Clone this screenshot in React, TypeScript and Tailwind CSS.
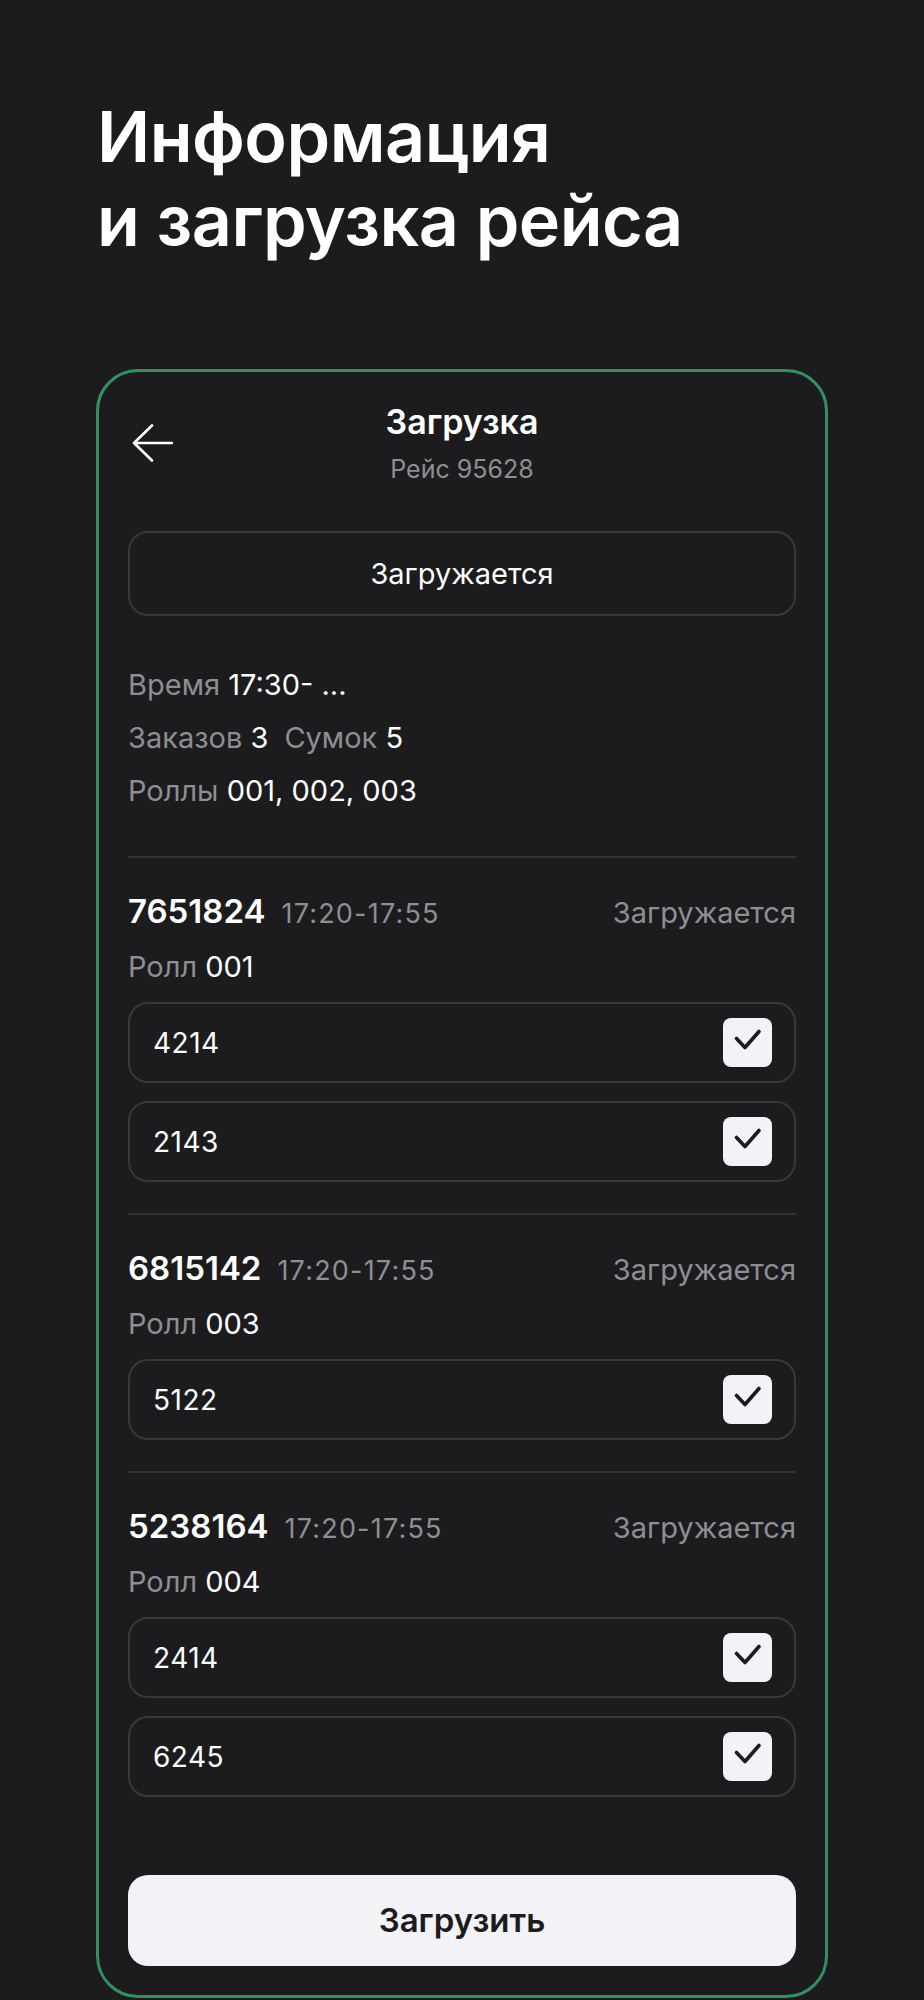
import React from "react";

type Order = {
  id: string;
  time: string;
  roll: string;
  bags: string[];
};

const ORDERS: Order[] = [
  { id: "7651824", time: "17:20-17:55", roll: "001", bags: ["4214", "2143"] },
  { id: "6815142", time: "17:20-17:55", roll: "003", bags: ["5122"] },
  { id: "5238164", time: "17:20-17:55", roll: "004", bags: ["2414", "6245"] },
];

const FONT = { fontFamily: "Inter, 'Noto Sans', sans-serif" };

function BackArrow() {
  return (
    <svg width="41" height="38" viewBox="0 0 41 38" fill="none">
      <path
        d="M40 19H2M20 1.5L2 19l18 17.5"
        stroke="#fff"
        strokeWidth="2.6"
        strokeLinecap="round"
        strokeLinejoin="round"
      />
    </svg>
  );
}

function CheckBox() {
  return (
    <div className="flex h-[49px] w-[49px] items-center justify-center rounded-[8px] bg-[#f2f2f7]">
      <svg width="49" height="49" viewBox="0 0 49 49" fill="none">
        <path
          d="M13.5 20.5l8.5 9 14-16"
          stroke="#1c1c1e"
          strokeWidth="3.6"
          strokeLinecap="round"
          strokeLinejoin="round"
        />
      </svg>
    </div>
  );
}

function Divider() {
  return <div className="h-[2px] w-full bg-[#333336]" />;
}

function OrderBlock({ order }: { order: Order }) {
  return (
    <div className="pt-[33px]">
      <div className="flex h-[40px] items-baseline">
        <span className="text-[33px] font-semibold leading-[40px] text-white">
          {order.id}
        </span>
        <span className="ml-[16px] text-[27px] leading-[40px] tracking-[1.2px] text-[#8e8e93]">
          {order.time}
        </span>
        <span className="ml-auto text-[29px] leading-[40px] text-[#8e8e93]">
          Загружается
        </span>
      </div>

      <div className="mt-[18px] text-[29px] leading-[36px] text-[#8e8e93]">
        Ролл <span className="text-white">{order.roll}</span>
      </div>

      <div className="mt-[17px] flex flex-col gap-[18px]">
        {order.bags.map((bag) => (
          <div
            key={bag}
            className="flex h-[81px] items-center justify-between rounded-[20px] border-2 border-[#38383a] pl-[23px] pr-[22px]"
          >
            <span className="text-[28px] tracking-[0.5px] text-white">{bag}</span>
            <CheckBox />
          </div>
        ))}
      </div>
    </div>
  );
}

export default function App() {
  return (
    <div className="min-h-[2000px] bg-[#1c1c1e] pt-[95px]" style={FONT}>
      <h1 className="pl-[97px] text-[70px] font-semibold leading-[84px] tracking-[-0.5px] text-white">
        Информация
        <br />
        и загрузка рейса
      </h1>

      <section className="mx-auto mt-[106px] w-[732px] rounded-[42px] border-[3px] border-[#358f5e] px-[29px] pb-[29px] pt-[30px]">
        <div className="grid grid-cols-[1fr_auto_1fr] items-center">
          <div className="pl-[4px]">
            <BackArrow />
          </div>
          <div className="flex flex-col items-center">
            <div className="text-[34px] font-semibold leading-[40px] text-white">
              Загрузка
            </div>
            <div className="mt-[12px] text-[25px] leading-[30px] text-[#8e8e93]">
              Рейс 95628
            </div>
          </div>
          <div />
        </div>

        <div className="mt-[47px] flex h-[85px] items-center justify-center rounded-[20px] border-2 border-[#38383a] text-[29px] text-white">
          Загружается
        </div>

        <div className="mt-[42px] text-[29px] leading-[53px] text-[#8e8e93]">
          <div>
            Время <span className="text-white">17:30- ...</span>
          </div>
          <div>
            Заказов <span className="text-white">3</span>
            <span className="ml-[16px]">Сумок</span>{" "}
            <span className="text-white">5</span>
          </div>
          <div>
            Роллы <span className="text-white">001, 002, 003</span>
          </div>
        </div>

        <div className="mt-[39px]">
          <Divider />
        </div>

        {ORDERS.map((order, i) => (
          <div key={order.id}>
            <OrderBlock order={order} />
            {i < ORDERS.length - 1 && (
              <div className="mt-[31px]">
                <Divider />
              </div>
            )}
          </div>
        ))}

        <button className="mt-[78px] flex h-[91px] w-full items-center justify-center rounded-[20px] bg-[#f2f2f7] text-[33px] font-semibold text-[#1c1c1e]">
          Загрузить
        </button>
      </section>
    </div>
  );
}
